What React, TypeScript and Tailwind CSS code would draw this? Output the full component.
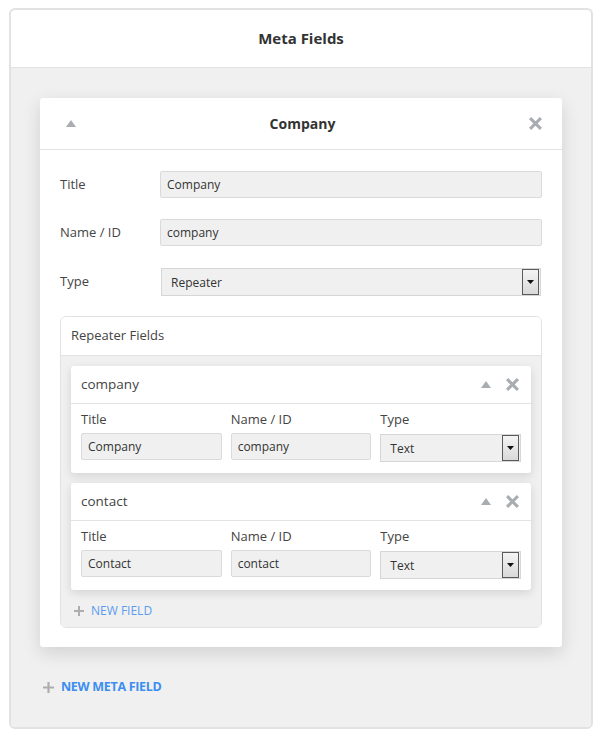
import React from "react";

const font = { fontFamily: '"Open Sans", "Noto Sans", Arial, sans-serif' };

const UpIcon = ({ className = "" }: { className?: string }) => (
  <svg width="10" height="7" viewBox="0 0 10 7" className={className}>
    <polygon points="5,0 10,7 0,7" fill="#a9adb1" />
  </svg>
);

const CloseIcon = ({ size = 13 }: { size?: number }) => (
  <svg width={size} height={size} viewBox="0 0 12 12">
    <path d="M2 2 L10 10 M10 2 L2 10" stroke="#a9adb1" strokeWidth="2.8" strokeLinecap="square" />
  </svg>
);

const PlusIcon = ({ size = 11 }: { size?: number }) => (
  <svg width={size} height={size} viewBox="0 0 10 10">
    <path d="M5 0 V10 M0 5 H10" stroke="#adadad" strokeWidth="2" />
  </svg>
);

const Input = ({ value }: { value: string }) => (
  <div className="h-[27px] flex items-center px-[6px] bg-[#f0f0f0] border border-[#dadada] rounded-[2px] text-[12px] text-[#333]">
    {value}
  </div>
);

const Select = ({ value }: { value: string }) => (
  <div className="h-[28px] flex items-center bg-[#f0f0f0] border border-[#d6d6d6] text-[12px] text-[#333] pl-[9px] pr-[1px]">
    <span className="flex-1 pt-[2px]">{value}</span>
    <div className="w-[17px] h-[26px] border border-[#5a5a5a] bg-gradient-to-b from-[#f4f4f4] to-[#d9d9d9] flex items-center justify-center">
      <svg width="7" height="4" viewBox="0 0 7 4">
        <polygon points="0,0 7,0 3.5,4" fill="#111" />
      </svg>
    </div>
  </div>
);

const FieldRow = ({ label, children }: { label: string; children: React.ReactNode }) => (
  <div className="flex items-center">
    <div className="w-[100px] text-[13px] text-[#444]">{label}</div>
    <div className="flex-1">{children}</div>
  </div>
);

const SubField = ({ name, title, id }: { name: string; title: string; id: string }) => (
  <div className="bg-white rounded-[3px] shadow-[0_3px_10px_rgba(0,0,0,0.12)]">
    <div className="h-[38px] flex items-center pl-[10px] pr-[12px] border-b border-[#e3e3e3]">
      <span className="flex-1 text-[13.5px] text-[#444]">{name}</span>
      <UpIcon className="mr-[15px]" />
      <CloseIcon size={13} />
    </div>
    <div className="grid grid-cols-3 gap-x-[9px] px-[10px] pt-[2px] pb-[11px]">
      <div>
        <div className="text-[13px] text-[#444] h-[27px] flex items-center">Title</div>
        <Input value={title} />
      </div>
      <div>
        <div className="text-[13px] text-[#444] h-[27px] flex items-center">Name / ID</div>
        <Input value={id} />
      </div>
      <div>
        <div className="text-[13px] text-[#444] h-[27px] flex items-center">Type</div>
        <div className="pt-[1px]">
          <Select value="Text" />
        </div>
      </div>
    </div>
  </div>
);

export default function App() {
  return (
    <div className="w-[600px] h-[736px] bg-white pt-[8px] pl-[9px]" style={font}>
      <div className="w-[584px] border-2 border-[#e2e2e2] rounded-[6px] overflow-hidden">
        <div className="h-[58px] flex items-center justify-center border-b border-[#e2e2e2] text-[15px] font-bold text-[#333]">
          Meta Fields
        </div>
        <div className="bg-[#f0f0f0] px-[29px] pt-[30px]">
          <div className="bg-white rounded-[3px] shadow-[0_6px_18px_rgba(0,0,0,0.13)]">
            <div className="h-[52px] flex items-center px-[25px] border-b border-[#e3e3e3]">
              <UpIcon className="ml-[1px]" />
              <span className="flex-1 text-center text-[14px] font-bold text-[#333]">Company</span>
              <span className="-mr-[5px]">
                <CloseIcon size={13} />
              </span>
            </div>
            <div className="px-[20px] pt-[21px] pb-[19px] flex flex-col">
              <FieldRow label="Title">
                <Input value="Company" />
              </FieldRow>
              <div className="h-[21px]" />
              <FieldRow label="Name / ID">
                <Input value="company" />
              </FieldRow>
              <div className="h-[22px]" />
              <FieldRow label="Type">
                <div className="pl-[1px] pr-[1px]">
                  <Select value="Repeater" />
                </div>
              </FieldRow>
              <div className="mt-[20px] border border-[#e2e2e2] rounded-[6px] overflow-hidden">
                <div className="h-[39px] bg-white flex items-center pl-[10px] border-b border-[#e2e2e2] text-[13px] text-[#444]">
                  Repeater Fields
                </div>
                <div className="bg-[#f0f0f0] px-[10px] pt-[10px] flex flex-col gap-[10px]">
                  <SubField name="company" title="Company" id="company" />
                  <SubField name="contact" title="Contact" id="contact" />
                  <div className="h-[30px] flex items-center pl-[3px] gap-[7px] -mt-[4px] mb-[1px]">
                    <PlusIcon size={10} />
                    <span className="text-[12px] text-[#5c9cf0]">NEW FIELD</span>
                  </div>
                </div>
              </div>
            </div>
          </div>
          <div className="h-[80px] flex items-center pl-[3px] gap-[7px]">
            <PlusIcon size={11} />
            <span className="text-[12.5px] font-bold text-[#3b8ef0] tracking-[-0.3px]">NEW META FIELD</span>
          </div>
        </div>
      </div>
    </div>
  );
}
